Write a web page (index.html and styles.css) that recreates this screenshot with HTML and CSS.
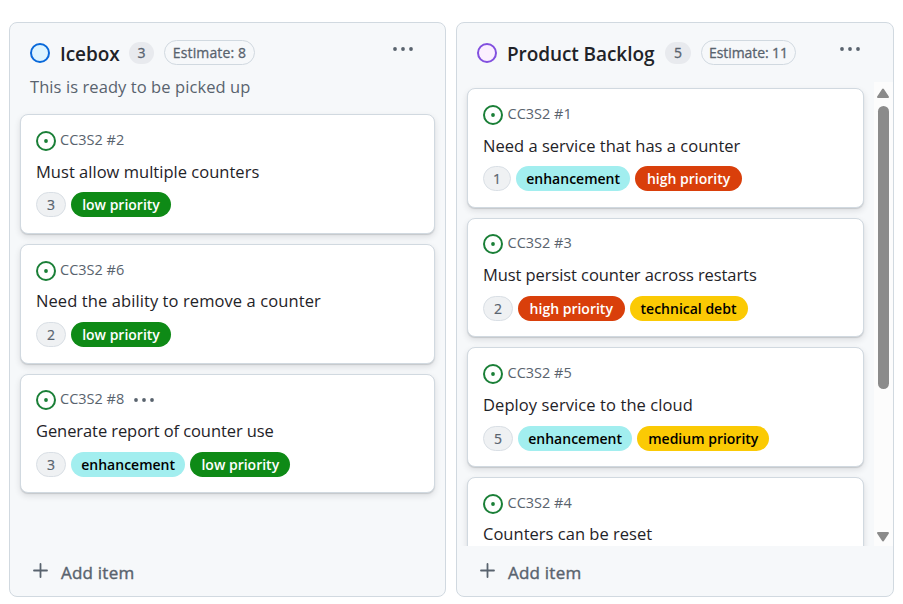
FILE: index.html
```html
<!DOCTYPE html>
<html lang="en">
<head>
<meta charset="utf-8">
<title>Project board</title>
<link rel="stylesheet" href="styles.css">
</head>
<body>
<svg class="defs" aria-hidden="true">
  <symbol id="open" viewBox="0 0 20 20"><circle cx="10" cy="10" r="9" fill="none" stroke="#1a7f37" stroke-width="2"/><circle cx="10" cy="10" r="1.9" fill="#1a7f37"/></symbol>
  <symbol id="dots" viewBox="0 0 22 6"><circle cx="3" cy="3" r="1.9"/><circle cx="11" cy="3" r="1.9"/><circle cx="19" cy="3" r="1.9"/></symbol>
  <symbol id="plus" viewBox="0 0 16 16"><path d="M7.5 1v13M1 7.5h13" fill="none" stroke="#59636e" stroke-width="1.8" stroke-linecap="round"/></symbol>
</svg>
<main class="board">
  <section class="column icebox">
    <header class="head">
      <span class="status blue"></span>
      <h2>Icebox</h2>
      <span class="count">3</span>
      <span class="estimate">Estimate: 8</span>
      <svg class="kebab"><use href="#dots"/></svg>
    </header>
    <p class="description">This is ready to be picked up</p>
    <div class="content">
      <div class="cards">
        <article class="card">
          <div class="meta"><svg class="issue"><use href="#open"/></svg><span>CC3S2 #2</span></div>
          <h3>Must allow multiple counters</h3>
          <div class="labels"><span class="points">3</span><span class="label low">low priority</span></div>
        </article>
        <article class="card">
          <div class="meta"><svg class="issue"><use href="#open"/></svg><span>CC3S2 #6</span></div>
          <h3 class="wider">Need the ability to remove a counter</h3>
          <div class="labels"><span class="points">2</span><span class="label low">low priority</span></div>
        </article>
        <article class="card">
          <div class="meta"><svg class="issue"><use href="#open"/></svg><span>CC3S2 #8</span><svg class="more"><use href="#dots"/></svg></div>
          <h3 class="tighter">Generate report of counter use</h3>
          <div class="labels"><span class="points">3</span><span class="label enhancement">enhancement</span><span class="label low">low priority</span></div>
        </article>
      </div>
    </div>
    <footer class="add"><svg><use href="#plus"/></svg><span>Add item</span></footer>
  </section>

  <section class="column backlog">
    <header class="head">
      <span class="status purple"></span>
      <h2>Product Backlog</h2>
      <span class="count">5</span>
      <span class="estimate">Estimate: 11</span>
      <svg class="kebab"><use href="#dots"/></svg>
    </header>
    <div class="content">
      <div class="cards">
        <article class="card">
          <div class="meta"><svg class="issue"><use href="#open"/></svg><span>CC3S2 #1</span></div>
          <h3>Need a service that has a counter</h3>
          <div class="labels"><span class="points one">1</span><span class="label enhancement">enhancement</span><span class="label high">high priority</span></div>
        </article>
        <article class="card">
          <div class="meta"><svg class="issue"><use href="#open"/></svg><span>CC3S2 #3</span></div>
          <h3 class="tighter">Must persist counter across restarts</h3>
          <div class="labels"><span class="points">2</span><span class="label high">high priority</span><span class="label debt">technical debt</span></div>
        </article>
        <article class="card">
          <div class="meta"><svg class="issue"><use href="#open"/></svg><span>CC3S2 #5</span></div>
          <h3 class="wider">Deploy service to the cloud</h3>
          <div class="labels"><span class="points">5</span><span class="label enhancement">enhancement</span><span class="label medium">medium priority</span></div>
        </article>
        <article class="card">
          <div class="meta"><svg class="issue"><use href="#open"/></svg><span>CC3S2 #4</span></div>
          <h3>Counters can be reset</h3>
        </article>
      </div>
      <div class="scrollbar">
        <svg viewBox="0 0 14 11"><path d="M7 1.5 12 9h-10z"/></svg>
        <span class="thumb"></span>
        <svg class="down" viewBox="0 0 14 11"><path d="M7 9.5 12 2h-10z"/></svg>
      </div>
    </div>
    <footer class="add"><svg><use href="#plus"/></svg><span>Add item</span></footer>
  </section>
</main>
</body>
</html>
```
FILE: styles.css
```css
* { box-sizing: border-box; }
body { margin: 0; background: #fff; color: #1f2328; font-family: "Segoe UI", "Open Sans", "Noto Sans", sans-serif; overflow: hidden; }
h2, h3, p { margin: 0; font-weight: 400; white-space: nowrap; }
span { white-space: nowrap; }
svg { display: block; flex: none; }
.defs { display: none; }
.board { display: flex; gap: 10px; height: 604px; padding: 22px 0 7px 9px; }
.column { display: flex; flex-direction: column; width: 437px; border: 1px solid #d1d9e0; border-radius: 8px; background: #f6f8fa; overflow: hidden; }
.backlog { width: 438px; }

.head { display: flex; align-items: center; flex: none; height: 51px; padding: 9px 31px 0 20px; }
.backlog .head { height: 59px; padding-bottom: 8px; padding-right: 32px; }
.status { width: 20px; height: 20px; margin-right: 10px; border: 2px solid; border-radius: 50%; }
.blue { border-color: #0969da; background: #ddf4ff; }
.purple { border-color: #8250df; background: #fbefff; }
h2 { width: 59px; font-size: 19px; line-height: 28px; font-weight: 600; padding-top: 2px; letter-spacing: -.08px; }
.backlog h2 { width: 148px; }
.count { width: 25px; height: 22px; margin: 0 10px; border-radius: 11px; background: #e8eaee; color: #59636e; font-size: 14px; line-height: 22px; text-align: center; -webkit-text-stroke: .3px; }
.backlog .count { width: 26px; }
.estimate { width: 91px; height: 25px; margin-bottom: 1px; border: 1px solid #d1d9e0; border-radius: 13px; color: #59636e; font-size: 14px; line-height: 23px; letter-spacing: .14px; text-align: center; -webkit-text-stroke: .3px; }
.backlog .estimate { width: 95px; letter-spacing: -.08px; }
.kebab { width: 22px; height: 6px; margin: 0 0 8px auto; fill: #59636e; }
.description { flex: none; height: 34px; padding: 0 0 0 20px; color: #59636e; font-size: 16.5px; line-height: 26px; letter-spacing: .08px; }

.content { display: flex; flex: 1; min-height: 0; overflow: hidden; }
.icebox .content { padding-top: 6px; }
.cards { display: flex; flex-direction: column; gap: 10px; flex: 1; padding: 0 10px; }
.backlog .cards { padding-top: 6px; }
.card { flex: none; height: 119.75px; padding: 15.8px 15px 0; border: 1px solid #d1d9e0; border-radius: 8px; background: #fff; box-shadow: 0 1px 1px rgba(31,35,40,.14), 0 3px 6px rgba(31,35,40,.12); }
.backlog .card { height: 119.6px; }
.meta { display: flex; align-items: center; height: 20px; color: #59636e; font-size: 14.5px; line-height: 20px; }
.issue { width: 20px; height: 20px; margin-right: 4px; }
.meta span { position: relative; top: -1px; width: 64px; }
.backlog .meta span { left: .5px; }
.more { width: 22px; height: 6px; margin-left: 9px; fill: #59636e; }
h3 { height: 26px; margin-top: 7.9px; font-size: 16.5px; line-height: 26px; letter-spacing: .02px; }
.wider { letter-spacing: .09px; }
.tighter { letter-spacing: -.08px; }
.labels { display: flex; gap: 5px; margin-top: 7.8px; }
.points, .label { height: 25px; border-radius: 13px; font-size: 14px; line-height: 25px; text-align: center; }
.points { width: 30px; border: 1px solid #d9dfe5; background: #eff1f3; color: #59636e; line-height: 23px; -webkit-text-stroke: .2px; }
.points.one { width: 28px; }
.label { font-weight: 600; color: #000; }
.low { width: 100px; background: #0e8a16; color: #fff; }
.high { width: 106.5px; background: #d93f0b; color: #fff; }
.enhancement { width: 114.3px; background: #a2eeef; }
.debt { width: 118px; background: #fbca04; }
.medium { width: 132px; background: #fbca04; }

.scrollbar { display: flex; flex-direction: column; align-items: center; flex: none; width: 19px; padding: 6px 0 4px; background: #fcfcfc; fill: #8b8b8b; stroke: #8b8b8b; stroke-width: 2; stroke-linejoin: round; }
.scrollbar svg { width: 14px; height: 11px; margin-right: 1px; }
.thumb { width: 11px; height: 283px; margin-top: 7px; border-radius: 6px; background: #8b8b8b; }
.scrollbar .down { margin-top: auto; }
.add { display: flex; flex: none; height: 50px; padding: 17px 0 0 23px; color: #59636e; font-size: 17px; line-height: 20px; letter-spacing: .22px; -webkit-text-stroke: .4px; }
.add svg { width: 16px; height: 16px; margin-right: 12px; }
```
